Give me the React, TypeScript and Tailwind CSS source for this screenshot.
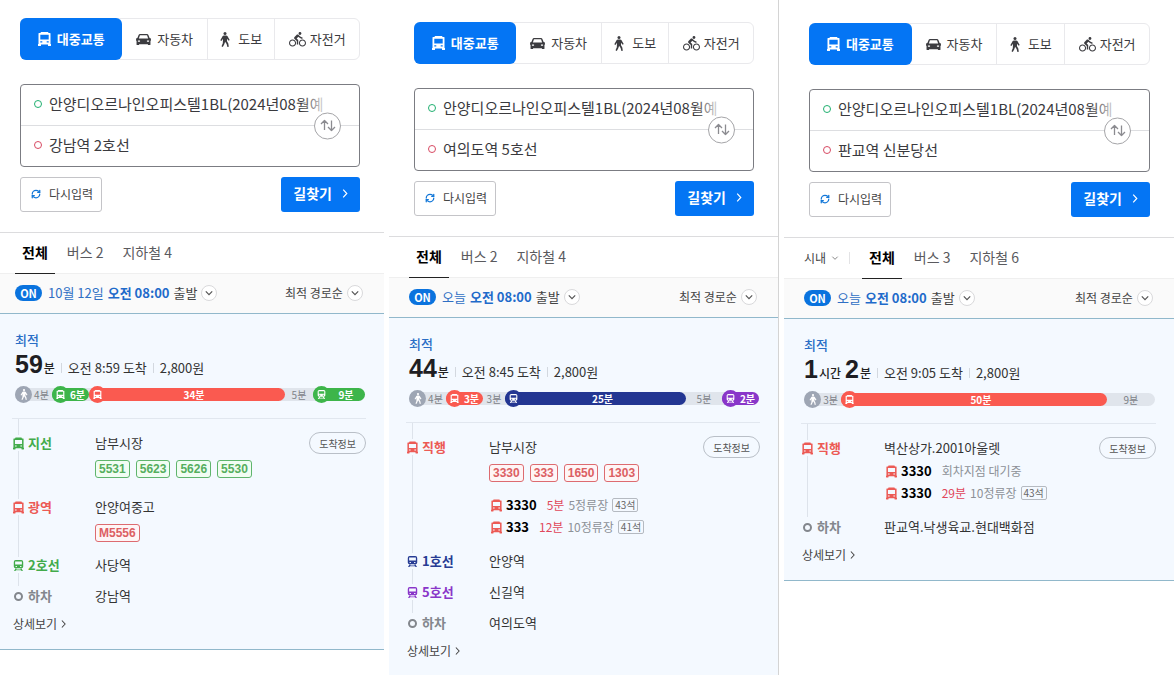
import { ReactNode, useState } from "react";

import clsx from "clsx";
import { LuRefreshCw } from "react-icons/lu";
import { MdDirectionsBike } from "react-icons/md";

type Vehicle = "bus" | "train" | "walk";
type Tone = "green" | "red" | "navy" | "purple" | "gray";

interface Segment {
  minutes: number;
  span: number;
  vehicle?: Vehicle;
  tone?: Tone;
}

interface Arrival {
  route: string;
  wait?: string;
  note: string;
  seats?: string;
}

interface Step {
  vehicle?: Vehicle;
  tone: Tone;
  label: string;
  stop: string;
  routes?: string[];
  arrivals?: Arrival[];
  info?: boolean;
  spaced?: boolean;
}

interface Trip {
  id: string;
  goal: string;
  cityFilter?: boolean;
  busCount: number;
  subwayCount: number;
  day: string;
  hours?: number;
  minutes: number;
  arriveAt: string;
  segments: Segment[];
  steps: Step[];
}

const START = "안양디오르나인오피스텔1BL(2024년08월예";

const TEXT_TONE: Record<Tone, string> = {
  green: "text-[#42ab4b]",
  red: "text-[#ec5a55]",
  navy: "text-[#263c94]",
  purple: "text-[#8936c9]",
  gray: "text-[#83878d]"
};

const FILL_TONE: Record<Tone, string> = {
  green: "bg-[#3db54a]",
  red: "bg-[#fa5a50]",
  navy: "bg-[#233692]",
  purple: "bg-[#8936c9]",
  gray: "bg-[#9ea6b4]"
};

const BADGE_TONE: Record<Tone, string> = {
  green: "border-[#5fb56d] bg-[#f1fdf3] text-[#55ae5e]",
  red: "border-[#dd6b70] bg-[#fef5f6] text-[#dc5f63]",
  navy: "border-[#263c94] text-[#263c94]",
  purple: "border-[#8936c9] text-[#8936c9]",
  gray: "border-gray-400 text-gray-500"
};

const trips: Trip[] = [
  {
    id: "gangnam",
    goal: "강남역 2호선",
    busCount: 2,
    subwayCount: 4,
    day: "10월 12일",
    minutes: 59,
    arriveAt: "8:59",
    segments: [
      { minutes: 4, span: 37, vehicle: "walk", tone: "gray" },
      { minutes: 6, span: 37, vehicle: "bus", tone: "green" },
      { minutes: 34, span: 196, vehicle: "bus", tone: "red" },
      { minutes: 5, span: 28 },
      { minutes: 9, span: 52, vehicle: "train", tone: "green" }
    ],
    steps: [
      {
        vehicle: "bus",
        tone: "green",
        label: "지선",
        stop: "남부시장",
        routes: ["5531", "5623", "5626", "5530"],
        info: true,
        spaced: true
      },
      { vehicle: "bus", tone: "red", label: "광역", stop: "안양여중고", routes: ["M5556"] },
      { vehicle: "train", tone: "green", label: "2호선", stop: "사당역" },
      { tone: "gray", label: "하차", stop: "강남역" }
    ]
  },
  {
    id: "yeouido",
    goal: "여의도역 5호선",
    busCount: 2,
    subwayCount: 4,
    day: "오늘",
    minutes: 44,
    arriveAt: "8:45",
    segments: [
      { minutes: 4, span: 37, vehicle: "walk", tone: "gray" },
      { minutes: 3, span: 37, vehicle: "bus", tone: "red" },
      { minutes: 3, span: 22 },
      { minutes: 25, span: 181, vehicle: "train", tone: "navy" },
      { minutes: 5, span: 36 },
      { minutes: 2, span: 37, vehicle: "train", tone: "purple" }
    ],
    steps: [
      {
        vehicle: "bus",
        tone: "red",
        label: "직행",
        stop: "남부시장",
        routes: ["3330", "333", "1650", "1303"],
        arrivals: [
          { route: "3330", wait: "5분", note: "5정류장", seats: "43석" },
          { route: "333", wait: "12분", note: "10정류장", seats: "41석" }
        ],
        info: true
      },
      { vehicle: "train", tone: "navy", label: "1호선", stop: "안양역" },
      { vehicle: "train", tone: "purple", label: "5호선", stop: "신길역" },
      { tone: "gray", label: "하차", stop: "여의도역" }
    ]
  },
  {
    id: "pangyo",
    goal: "판교역 신분당선",
    cityFilter: true,
    busCount: 3,
    subwayCount: 6,
    day: "오늘",
    hours: 1,
    minutes: 2,
    arriveAt: "9:05",
    segments: [
      { minutes: 3, span: 37, vehicle: "walk", tone: "gray" },
      { minutes: 50, span: 265, vehicle: "bus", tone: "red" },
      { minutes: 9, span: 48 }
    ],
    steps: [
      {
        vehicle: "bus",
        tone: "red",
        label: "직행",
        stop: "벽산상가.2001아울렛",
        arrivals: [
          { route: "3330", note: "회차지점 대기중" },
          { route: "3330", wait: "29분", note: "10정류장", seats: "43석" }
        ],
        info: true
      },
      { tone: "gray", label: "하차", stop: "판교역.낙생육교.현대백화점" }
    ]
  }
];

// per-panel spacing, in the order of the trips above
const PANEL_TOP = ["pt-[18px]", "pt-[22px]", "pt-[23px]"];
const PANEL_GUTTER = ["pl-0", "pl-[5px]", "pl-[5px]"];

export default function App() {
  return (
    <main className="grid min-h-screen grid-cols-[384fr_390fr_390fr] gap-[5px] bg-white font-['Noto_Sans_CJK_KR',sans-serif] text-[#333]">
      {trips.map((trip, index) => (
        <TripPanel
          key={trip.id}
          trip={trip}
          top={PANEL_TOP[index]}
          gutter={PANEL_GUTTER[index]}
          edge={index === 1}
        />
      ))}
    </main>
  );
}

function TripPanel(props: { trip: Trip; top: string; gutter: string; edge: boolean }) {
  const { trip, gutter } = props;

  return (
    <section className={clsx("min-w-0", props.top, props.edge && "border-r border-[#d4d4d4]")}>
      <div className={gutter}>
        <div className="pr-6 pb-5 pl-5">
          <ModeTabs />
          <SearchForm trip={trip} />
        </div>
      </div>
      <ResultTabs trip={trip} gutter={gutter} />
      <DepartureBar trip={trip} gutter={gutter} />
      <article className={clsx("border-t border-[#91b8cb] bg-[#f4f9ff]", gutter, !props.edge && "border-b")}>
        <Summary trip={trip} />
        <div className="pr-[18px] pl-3">
          <StepList steps={trip.steps} />
          <a href="#detail" className="flex h-5 items-center gap-1 pl-px text-[12px] text-[#444]">
            상세보기
            <ChevronRight className="h-2 w-[5px]" />
          </a>
        </div>
        <div className="h-[15px]" />
      </article>
    </section>
  );
}

function ModeTabs() {
  const [mode, setMode] = useState("transit");
  const modes: { id: string; label: string; icon: ReactNode }[] = [
    { id: "transit", label: "대중교통", icon: <BusIcon className="h-3.5 w-[13px]" /> },
    { id: "car", label: "자동차", icon: <CarIcon className="h-[13px] w-[15px]" /> },
    { id: "walk", label: "도보", icon: <WalkIcon className="h-[15px] w-2.5" /> },
    { id: "bike", label: "자전거", icon: <MdDirectionsBike className="size-[17px]" /> }
  ];

  return (
    <nav className="grid h-[42px] grid-cols-[6fr_5fr_4fr_5fr] rounded-md border border-[#e9e9ec]">
      {modes.map((item, index) => (
        <button
          key={item.id}
          type="button"
          onClick={() => setMode(item.id)}
          className={clsx(
            "flex items-center justify-center text-[13px] whitespace-nowrap",
            item.id === mode ? "-my-px -ml-px rounded-md bg-[#0475f4] font-bold text-white" : "text-[#3c3c40]",
            index > 1 && "border-l border-[#e9e9ec]",
            item.id === "bike" ? "gap-1" : item.id === "walk" ? "gap-2" : "gap-1.5"
          )}
        >
          {item.icon}
          {item.label}
        </button>
      ))}
    </nav>
  );
}

function SearchForm(props: { trip: Trip }) {
  const { id, goal } = props.trip;

  return (
    <form onSubmit={(event) => event.preventDefault()}>
      <div className="relative mt-6 rounded border border-[#7b7c82]">
        <label className="flex h-[41px] items-center gap-[7px] border-b border-[#dddee1] pr-[30px] pb-[3px] pl-[13px]" htmlFor={`start-${id}`}>
          <span className="size-2 rounded-full border border-[#20b070]" />
          <span className="relative min-w-0 flex-1">
            <input
              id={`start-${id}`}
              aria-label="출발지"
              defaultValue={START}
              className="block h-6 w-full bg-transparent text-[15px] text-[#3a3a3e] outline-none"
            />
            <span className="pointer-events-none absolute inset-y-0 right-0 w-7 bg-linear-to-l from-white to-transparent" />
          </span>
        </label>
        <label className="flex h-10 items-center gap-[7px] pr-[30px] pb-[3px] pl-[13px]" htmlFor={`goal-${id}`}>
          <span className="size-2 rounded-full border border-[#d84a63]" />
          <input
            id={`goal-${id}`}
            aria-label="도착지"
            defaultValue={goal}
            className="block h-6 min-w-0 flex-1 bg-transparent text-[15px] text-[#3a3a3e] outline-none"
          />
        </label>
        <button
          type="button"
          aria-label="출발지와 도착지 바꾸기"
          className="absolute top-1/2 right-[18px] flex size-[27px] -translate-y-1/2 items-center justify-center rounded-full border border-[#a5a5a8] bg-white text-[#8b8b90]"
        >
          <svg viewBox="0 0 16 12" className="h-3 w-4" fill="none" stroke="currentColor" strokeWidth="1.3">
            <path d="M4.5 10.5V1M1 4.5 4.5 1 8 4.5M11.5 1v10M8 7.5l3.5 3.5L15 7.5" />
          </svg>
        </button>
      </div>

      <div className="mt-2.5 flex justify-between">
        <button type="reset" className="flex h-[35px] items-center gap-2 rounded-[3px] border border-[#c4c4c8] pr-2 pb-0.5 pl-2.5 text-[12px] text-[#444]">
          <LuRefreshCw className="size-2.5 text-[#1277d8]" strokeWidth={3} />
          다시입력
        </button>
        <button type="submit" className="flex h-[35px] items-center gap-2.5 rounded-[3px] bg-[#0475f4] px-3 pb-0.5 text-[14px] font-bold text-white">
          길찾기
          <ChevronRight className="h-[9px] w-1.5" />
        </button>
      </div>
    </form>
  );
}

function ResultTabs(props: { trip: Trip; gutter: string }) {
  const { trip } = props;
  const [active, setActive] = useState("all");
  const tabs = [
    { id: "all", label: "전체" },
    { id: "bus", label: `버스 ${trip.busCount}` },
    { id: "subway", label: `지하철 ${trip.subwayCount}` }
  ];

  return (
    <div className={clsx("border-t border-[#dcdcde]", props.gutter)}>
      <div className="flex h-10 items-center pl-[15px]">
        {trip.cityFilter ? (
          <div className="mr-3 flex h-3 items-center gap-1 border-r border-[#e3e3e5] pr-2.5 text-[12px] text-[#444]">
            <select aria-label="지역" className="appearance-none bg-transparent outline-none">
              <option>시내</option>
            </select>
            <ChevronDown className="h-1 w-2 text-[#888]" />
          </div>
        ) : null}
        <div className="flex h-full gap-[5px]">
          {tabs.map((tab) => (
            <button
              key={tab.id}
              type="button"
              onClick={() => setActive(tab.id)}
              className={clsx(
                "relative px-[7px] pb-0.5 text-[14px] whitespace-nowrap",
                tab.id === active ? "font-bold text-black" : "text-[#5a5a5e]"
              )}
            >
              {tab.label}
              {tab.id === active ? <span className="absolute inset-x-0 top-full h-px bg-[#222]" /> : null}
            </button>
          ))}
        </div>
      </div>
    </div>
  );
}

function DepartureBar(props: { trip: Trip; gutter: string }) {
  return (
    <div className={clsx("border-t border-[#efefef] bg-[#fafafa]", props.gutter)}>
      <div className="flex h-[39px] items-center justify-between pr-[21px] pb-0.5 pl-[15px]">
        <div className="flex items-center text-[13px] whitespace-nowrap">
          <button type="button" aria-pressed="true" className="h-4 w-[27px] rounded-full bg-[#0a73de] text-[11px] leading-4 font-bold text-white">
            ON
          </button>
          <button type="button" className="ml-1.5 flex items-center gap-1">
            <span className="text-[#2f6fc4]">{props.trip.day}</span>
            <strong className="font-bold text-[#1f6bca]">오전 08:00</strong>
            <span className="text-[#444]">출발</span>
            <RoundChevron />
          </button>
        </div>
        <label className="flex items-center gap-1 text-[12px] text-[#444]">
          <select aria-label="정렬" className="appearance-none bg-transparent outline-none">
            <option>최적 경로순</option>
          </select>
          <RoundChevron />
        </label>
      </div>
    </div>
  );
}

function Summary(props: { trip: Trip }) {
  const { trip } = props;
  const total = trip.segments.reduce((sum, segment) => sum + segment.span, 0);

  return (
    <div className="pt-[17px] pr-[19px] pb-[15px] pl-[15px]">
      <h2 className="text-[13px] leading-[18px] font-medium text-[#2a6ec6]">최적</h2>
      <div className="flex h-[30px] items-baseline gap-1.5 leading-none whitespace-nowrap">
        <p className="flex items-baseline gap-px text-[12px] font-medium text-[#222]">
          {trip.hours ? (
            <>
              <BigNumber value={trip.hours} />
              <span className="mr-[3px]">시간</span>
            </>
          ) : null}
          <BigNumber value={trip.minutes} />
          분
        </p>
        <span className="h-2.5 w-px bg-[#d3d8df]" />
        <span className="text-[13px]">오전 {trip.arriveAt} 도착</span>
        <span className="h-2.5 w-px bg-[#d3d8df]" />
        <span className="text-[13px]">2,800원</span>
      </div>

      <div className="mt-[7px] flex h-[17px] items-center">
        <div className="flex h-[13px] flex-1 rounded-full bg-[#e0e5ec] text-[10px] leading-[13px]">
          {trip.segments.map((segment, index) => (
            <SegmentBar key={index} segment={segment} total={total} />
          ))}
        </div>
      </div>
    </div>
  );
}

function BigNumber(props: { value: number }) {
  return <b className="font-['Liberation_Sans',sans-serif] text-[25px] leading-[30px] font-bold text-[#1e1e23]">{props.value}</b>;
}

function SegmentBar(props: { segment: Segment; total: number }) {
  const { minutes, span, vehicle, tone } = props.segment;
  const riding = vehicle !== undefined && vehicle !== "walk";

  return (
    <div
      style={{ width: `${(span / props.total) * 100}%` }}
      className={clsx(
        "relative rounded-full text-center",
        riding && "pl-3.5",
        vehicle === "walk" && "pl-4",
        riding && tone ? FILL_TONE[tone] : null,
        riding ? "font-bold text-white" : "text-[#7d8288]"
      )}
    >
      {vehicle && tone ? (
        <span
          className={clsx(
            "absolute -top-0.5 left-0 flex size-[17px] items-center justify-center rounded-full text-white",
            FILL_TONE[tone]
          )}
        >
          <VehicleIcon vehicle={vehicle} className="size-[9px]" />
        </span>
      ) : null}
      {minutes}분
    </div>
  );
}

function StepList(props: { steps: Step[] }) {
  return (
    <ol className="relative border-t border-[#e1e7ef] pt-3.5 pb-2 pl-px">
      <li aria-hidden="true" className="absolute top-0 bottom-7 left-[6px] w-px bg-[#dde3eb]" />
      {props.steps.map((step, index) => (
        <li key={step.label} className={clsx("relative flex", index > 0 && "mt-[11px]")}>
          <div className={clsx("flex h-5 w-[82px] shrink-0 items-center gap-1 text-[13px] font-bold", TEXT_TONE[step.tone])}>
            <span className="flex h-4 w-[11px] items-center justify-center bg-[#f4f9ff]">
              {step.vehicle ? (
                <VehicleIcon vehicle={step.vehicle} className="h-[13px] w-[11px]" />
              ) : (
                <span className="size-[9px] rounded-full border-2 border-[#83878d]" />
              )}
            </span>
            {step.label}
          </div>
          <div className="min-w-0 flex-1">
            <div className="flex h-5 items-center justify-between text-[13px] whitespace-nowrap text-[#333]">
              {step.stop}
              {step.info ? (
                <button type="button" className="h-[22px] rounded-full border border-[#b9bfc7] px-[9px] text-[10px] text-[#555]">
                  도착정보
                </button>
              ) : null}
            </div>
            <StepRoutes step={step} />
          </div>
        </li>
      ))}
    </ol>
  );
}

function StepRoutes(props: { step: Step }) {
  const { routes, arrivals, tone, spaced } = props.step;

  if (!routes && !arrivals) {
    return null;
  }

  return (
    <div className={spaced ? "pb-2" : "pb-0.5"}>
      {routes ? (
        <ul className="mt-[7px] flex gap-1.5 font-['Liberation_Sans',sans-serif] text-[12px] leading-4 font-bold">
          {routes.map((route) => (
            <li key={route} className={clsx("rounded-[3px] border px-[3px]", BADGE_TONE[tone])}>
              {route}
            </li>
          ))}
        </ul>
      ) : null}
      {arrivals ? (
        <ul className={routes ? "mt-3" : "mt-0.5"}>
          {arrivals.map((arrival, index) => (
            <li key={index} className="flex h-[22px] items-center gap-1 pl-0.5 text-[12px] whitespace-nowrap text-[#8d9197]">
              <BusIcon className="h-[13px] w-[11px] text-[#ec5a55]" />
              <b className="mr-1.5 text-[13px] font-bold text-black">{arrival.route}</b>
              {arrival.wait ? <span className="text-[#e0475b]">{arrival.wait}</span> : null}
              <span>{arrival.note}</span>
              {arrival.seats ? (
                <span className="rounded-xs border border-[#b5bac1] px-0.5 text-[10px] leading-3 text-[#666]">{arrival.seats}</span>
              ) : null}
            </li>
          ))}
        </ul>
      ) : null}
    </div>
  );
}

function RoundChevron() {
  return (
    <span className="flex size-4 shrink-0 items-center justify-center rounded-full border border-[#d9d9db] bg-white text-[#555]">
      <ChevronDown className="h-1.5 w-2" />
    </span>
  );
}

function ChevronDown(props: { className: string }) {
  return (
    <svg viewBox="0 0 10 6" className={props.className} fill="none" stroke="currentColor" strokeWidth="1.5">
      <path d="m1 1 4 4 4-4" />
    </svg>
  );
}

function ChevronRight(props: { className: string }) {
  return (
    <svg viewBox="0 0 6 10" className={props.className} fill="none" stroke="currentColor" strokeWidth="1.3">
      <path d="m1 .6 4 4.400-4 4.400" />
    </svg>
  );
}

function VehicleIcon(props: { vehicle: Vehicle; className: string }) {
  if (props.vehicle === "walk") {
    return <WalkIcon className="h-[11px] w-2" />;
  }

  return props.vehicle === "bus" ? <BusIcon className={props.className} /> : <TrainIcon className={props.className} />;
}

function BusIcon(props: { className: string }) {
  return (
    <svg viewBox="0 0 13 14" className={props.className} fill="currentColor" fillRule="evenodd">
      <path d="M3 0h7l.6 1H12q.5 0 .5.6V12H13v1.500q0 .5-.5.5h-2q-.5 0-.5-.5V12.600H3v.9q0 .5-.5.5h-2Q0 14 0 13.500V12h.5V1.600Q.5 1 1 1h1.400zM2.300 2.800v4.700h8.400V2.800zM2.300 9.300v1.300h2V9.300zM8.700 9.300v1.300h2V9.300z" />
    </svg>
  );
}

function TrainIcon(props: { className: string }) {
  return (
    <svg viewBox="0 0 14 14" className={props.className} fill="currentColor" fillRule="evenodd">
      <path d="M3.500 0h7Q13 0 13 2.500v5.800q0 2.200-2.200 2.200H3.200Q1 10.500 1 8.300V2.500Q1 0 3.500 0M2.700 1.800v3.900h8.600V1.800zM3.300 7.500V9h1.700V7.500zM9 7.500V9h1.700V7.500z" />
      <path d="m3.300 10.500 1.500.5-.6 1h5.600l-.6-1 1.500-.5 2 3.500h-1.900l-.5-.9H3.700l-.5.900H1.300z" />
    </svg>
  );
}

function CarIcon(props: { className: string }) {
  return (
    <svg viewBox="0 0 16 14" className={props.className} fill="currentColor" fillRule="evenodd">
      <path d="M4.300 1h7.400q1.200 0 1.600 1.100L14.600 5.500 16 6v2l-.5.500V12.300q0 .7-.7.700h-1.400q-.7 0-.7-.7V12H3.300v.3q0 .7-.7.700H1.200q-.7 0-.7-.7V8.500L0 8V6l1.400-.5L2.700 2.100Q3.100 1 4.300 1M4.200 2.500 3 6h10l-1.200-3.500zM2 8v1.500h2.300V8zM11.700 8v1.500H14V8z" />
    </svg>
  );
}

function WalkIcon(props: { className: string }) {
  return (
    <svg viewBox="0 0 10 15" className={props.className} fill="currentColor">
      <circle cx="5" cy="1.500" r="1.500" />
      <path d="M3.900 3.400h2.300q.8 0 1.200.7L9.700 8l-1 .8-1.700-2v2.500l1.300 2.200.5 3.200-1.400.3-.8-3L5.100 9.800l-.8 2.400L2.800 15l-1.300-.7 1.300-3L3 6.800 1.400 9l-1.100-.7L2.700 4.100q.4-.7 1.200-.7" />
    </svg>
  );
}
